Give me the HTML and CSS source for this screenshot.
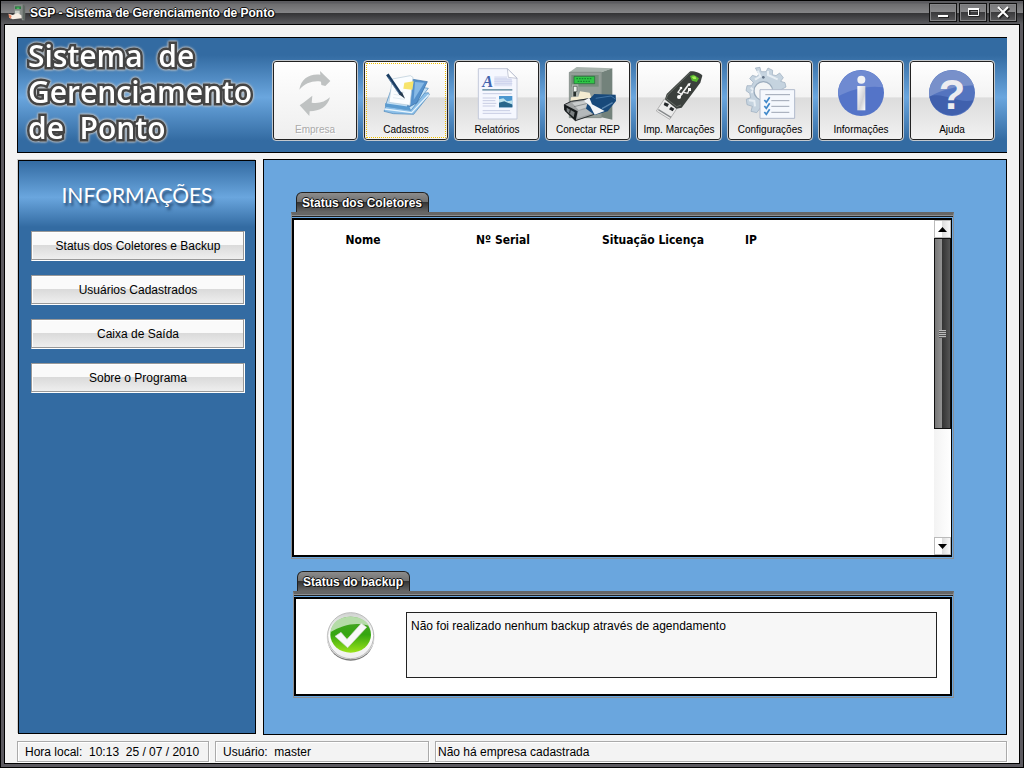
FILE: index.html
```
<!DOCTYPE html>
<html lang="pt-BR">
<head>
    <meta charset="UTF-8">
    <meta name="viewport" content="width=device-width, initial-scale=1.0">
    <title>SGP - Sistema de Gerenciamento de Ponto</title>
    <link rel="stylesheet" href="styles.css">
</head>
<body>
<div class="window">
    <div class="titlebar">
        <svg class="app-icon" viewBox="24 12 54 54">
            <path d="M42 15 L68 13 L76 17 L75 61 L66 61 L64 54 L43 52Z" fill="#858b87"/>
            <path d="M68 13 L76 17 L75 61 L68 58Z" fill="#606863"/>
            <path d="M45 19h18v8h-18z" fill="#2f7a45"/>
            <path d="M50 23h8v3h-8z" fill="#55e06a"/>
            <path d="M45 32h14v10h-14z" fill="#c9cdc6"/>
            <path d="M26 41 L38 45 L53 39 L64 46 L65 55 L38 58 L28 53Z" fill="#f7eee4"/>
            <path d="M26 41 L35 48 L32 56 L27 52Z" fill="#e98461"/>
        </svg>
        <span class="caption">SGP - Sistema de Gerenciamento de Ponto</span>
        <div class="window-buttons">
            <button type="button" aria-label="Minimizar"><svg viewBox="0 0 26 17"><path d="M9 13h10" stroke="#222" stroke-width="2"/><path d="M8 12h10" stroke="#fff" stroke-width="2"/></svg></button>
            <button type="button" aria-label="Maximizar"><svg viewBox="0 0 26 17"><path d="M9.500 6h9v6h-9z" fill="none" stroke="#222" stroke-width="2"/><path d="M8 4h11v2H8z" fill="#fff"/><path d="M8.500 4.500h10v7h-10z" fill="none" stroke="#fff"/></svg></button>
            <button type="button" aria-label="Fechar"><svg viewBox="0 0 26 17"><path d="M9 4l10 10M19 4L9 14" stroke="#222" stroke-width="3"/><path d="M8 3l10 10M18 3L8 13" stroke="#fff" stroke-width="2"/></svg></button>
        </div>
    </div>

    <div class="content">
        <header class="banner">
            <h1>Sistema  de
Gerenciamento
de  Ponto</h1>
            <nav class="toolbar">
                <button type="button" class="tool" disabled>
                    <svg viewBox="60 42 180 180">
                        <g fill="#bfc2c2">
                            <path d="M103 119 C108 85 135 70 166 74 L165 63 L196 93 L181 108 L169 105 L168 95 C145 91 120 99 103 119Z"/>
                            <path d="M195 142 C188 170 165 184 134 184 L133 198 L104 166 L117 157 L142 137 L140 158 C162 162 181 155 195 142Z"/>
                        </g>
                    </svg>
                    <span>Empresa</span>
                </button>
                <button type="button" class="tool focused">
                    <svg viewBox="333 42 180 180">
                        <path d="M357 184 L372 142 L490 128 L493 134 L446 193 L385 191Z" fill="#8cbfe8" stroke="#4a85b8" stroke-width="2"/>
                        <path d="M358 177 L440 188 L491 134" fill="none" stroke="#e8f5fd" stroke-width="4"/>
                        <path d="M361 168 L380 114 L470 112 L490 115 L438 181Z" fill="#c3e1f6" stroke="#4a85b8" stroke-width="2"/>
                        <path d="M438 87 L487 95 L456 158 L427 174Z" fill="#5591cc" stroke="#356ea6" stroke-width="2"/>
                        <path d="M450 96 L478 98 L446 150Z" fill="#86b9e6"/>
                        <path d="M360 160 L433 170 L438 181 L362 170Z" fill="#5a9bd0"/>
                        <path d="M382 87 L436 77 L444 82 L435 166 L372 157Z" fill="#fafdff" stroke="#b5c8d6" stroke-width="2"/>
                        <path d="M418 98 L446 94 L442 119 L415 116Z" fill="#f7e46c"/>
                        <path d="M389 123l29 4M386 133l27 4M384 143l34 5" stroke="#d5e2ec" stroke-width="2"/>
                        <path d="M367 73 L407 132" stroke="#1b3d62" stroke-width="9"/>
                        <path d="M369 82 L403 132" stroke="#6c91b8" stroke-width="2"/>
                        <path d="M402 133 L411 126 L420 146Z" fill="#263b50"/>
                    </svg>
                    <span>Cadastros</span>
                </button>
                <button type="button" class="tool">
                    <svg viewBox="51 42 180 180">
                        <path d="M85 56 L172 56 L201 84 L201 207 L85 207Z" fill="#f5f7fe" stroke="#c3c9da" stroke-width="3"/>
                        <path d="M172 56 L175 82 L201 85Z" fill="#fff" stroke="#aab1c3" stroke-width="2"/>
                        <path d="M133 79h38v7h15v23h-53z" fill="#dfe3f4"/>
                        <path d="M133 87h51M133 94h54M133 101h54" stroke="#c4caea" stroke-width="2"/>
                        <text x="97" y="112" font-family="Liberation Serif, serif" font-size="49" font-style="italic" font-weight="bold" fill="#4264ae">A</text>
                        <path d="M97 117h90v5H97z" fill="#769aab"/>
                        <path d="M98 131h87M98 144h40M98 152h38M98 160h41M98 168h38M98 182h82M98 190h86" stroke="#c7cce3" stroke-width="3"/>
                        <path d="M147 138h40v34h-40z" fill="#4b96cf"/>
                        <path d="M147 148 L160 145 L171 154 L187 151 V162 L147 158Z" fill="#bee3ed"/>
                        <path d="M147 158 L163 154 L187 164 V172 H147Z" fill="#28668b"/>
                    </svg>
                    <span>Relatórios</span>
                </button>
                <button type="button" class="tool">
                    <svg viewBox="324 42 180 180">
                        <path d="M358 67 L380 51 L487 55 L454 67Z" fill="#a9b4ae"/>
                        <path d="M454 67 L487 55 V209 L454 202Z" fill="#73827b"/>
                        <path d="M358 67 H454 V203 H358Z" fill="#949e99" stroke="#737d79" stroke-width="2"/>
                        <path d="M364 75 H446 V110 H364Z" fill="#768d7c"/>
                        <path d="M372 79 H434 V101 H372Z" fill="#30c646" stroke="#26633a" stroke-width="2"/>
                        <path d="M379 86h46M383 94h38" stroke="#148b30" stroke-width="4" stroke-dasharray="5 3"/>
                        <path d="M366 103h19v48h-19z" fill="#abb2ad"/>
                        <path d="M370 109h11v16h-11z" fill="#edf1ed" stroke="#444d49" stroke-width="2"/>
                        <path d="M374 126v13" stroke="#28302c" stroke-width="8"/>
                        <path d="M390 124 L419 128 L424 143 L362 153 L363 142 L385 140Z" fill="#f4ecd1"/>
                        <path d="M343 164 L364 154 L438 143 L451 187 L376 212 L344 180Z" fill="#a1a4a5" stroke="#282c2f" stroke-width="3"/>
                        <path d="M366 158 L427 149 L432 164 L386 180Z" fill="#c9cccd"/>
                        <path d="M385 183 L440 169 L446 184 L382 204Z" fill="#b5b9bb"/>
                        <path d="M372 170 L430 156" stroke="#6d7173" stroke-width="2"/>
                        <path d="M343 163 L383 184 L377 213 L344 182Z" fill="#15191b"/>
                        <path d="M350 173 L374 187 L371 202 L350 184Z" fill="#7b8082"/>
                        <path d="M361 178l-2 12" stroke="#17191a" stroke-width="3"/>
                        <path d="M414 153 L433 132 L497 134 L498 153 L473 184 L434 195 L408 176Z" fill="#18497a"/>
                        <path d="M402 152 L418 143 L426 163 L464 183 L434 194 L420 168Z" fill="#f3f5f8"/>
                        <path d="M437 145 L483 138 L496 147" fill="none" stroke="#4174a4" stroke-width="3"/>
                        <path d="M456 176 L488 158" stroke="#5884ad" stroke-width="4"/>
                    </svg>
                    <span>Conectar REP</span>
                </button>
                <button type="button" class="tool">
                    <svg viewBox="51 42 180 180">
                        <path d="M97 147 L135 175 L113 208 L73 183Z" fill="#ebebeb" stroke="#969696" stroke-width="2"/>
                        <path d="M79 179 L117 202" stroke="#85888a" stroke-width="4"/>
                        <path d="M98 157 L111 162 L106 171 L95 165ZM117 170 L127 176 L122 184 L111 178Z" fill="#24282a"/>
                        <path d="M173 65 C180 61 207 69 211 77 L205 98 L149 173 L133 176 L99 148 L104 132Z" fill="#3b403d"/>
                        <path d="M174 68 L107 135 L103 146 L134 170 L147 165" fill="none" stroke="#686e69" stroke-width="3"/>
                        <path d="M174 78 L185 74 L201 85 L194 96 L180 92Z" fill="#58b62f"/>
                        <path d="M179 80 L190 79 L193 87 L184 87Z" fill="#a8ef58"/>
                        <path d="M143 140 L171 102" stroke="#f4f4f4" stroke-width="5"/>
                        <path d="M166 102 L176 98 L173 109Z" fill="#fff"/>
                        <path d="M151 134 L138 127 L146 116M155 127 L167 130 L172 118" fill="none" stroke="#f1f1f1" stroke-width="4"/>
                        <circle cx="141" cy="141" r="6" fill="#fff"/>
                        <circle cx="147" cy="114" r="4" fill="#fff"/>
                        <path d="M168 114h9v9h-9z" fill="#fff"/>
                    </svg>
                    <span>Imp. Marcações</span>
                </button>
                <button type="button" class="tool">
                    <svg viewBox="324 42 180 180">
                        <path d="M370 54 L384 52 L387 65 L402 65 L408 54 L422 61 L421 74 L432 77 L443 69 L454 83 L446 94 L459 98 L462 111 L447 119 L435 137 L420 182 L385 174 L374 188 L357 184 L361 169 L345 164 L343 148 L356 143 L353 130 L342 122 L345 107 L359 107 L364 97 L353 86 L361 76 L374 80 L381 73Z" fill="#c5d3df" stroke="#99aabc" stroke-width="2"/>
                        <path d="M377 62 L385 79 L369 89 M408 63 L408 75 L437 88 M356 113 L366 121 L358 128 M351 151 L367 153 L369 169" fill="none" stroke="#e7eef4" stroke-width="6"/>
                        <circle cx="394" cy="123" r="28" fill="#f3f5f6" stroke="#9bacbd" stroke-width="4"/>
                        <circle cx="394" cy="82" r="4" fill="#607084"/>
                        <path d="M384 119 H488 V205 H384Z" fill="#f5f8fd" stroke="#b0b9cb" stroke-width="3"/>
                        <path d="M400 134h74M418 152h54M418 169h54M418 187h54" stroke="#9da5b4" stroke-width="3"/>
                        <path d="M397 150l6 7 10-15M397 168l6 7 10-15M397 186l6 7 10-15" fill="none" stroke="#4089ca" stroke-width="5"/>
                    </svg>
                    <span>Configurações</span>
                </button>
                <button type="button" class="tool">
                    <svg viewBox="51 42 180 180">
                        <defs>
                            <linearGradient id="silver" x1="0" y1="0" x2="1" y2="1">
                                <stop offset="0" stop-color="#fff"/><stop offset=".6" stop-color="#d2d2d6"/><stop offset="1" stop-color="#fff"/>
                            </linearGradient>
                        </defs>
                        <circle cx="141" cy="129" r="69" fill="#5474c8"/>
                        <path d="M73 139 A69 69 0 0 1 208 112 C160 105 112 118 73 139Z" fill="#6f8ad1"/>
                        <circle cx="142" cy="89" r="12" fill="#f1f2f5"/>
                        <path d="M130 108h24v73h-24z" fill="url(#silver)"/>
                    </svg>
                    <span>Informações</span>
                </button>
                <button type="button" class="tool">
                    <svg viewBox="324 42 180 180">
                        <circle cx="414" cy="129" r="69" fill="#5474bf"/>
                        <path d="M346 140 A69 69 0 0 1 479 106 C427 108 384 120 346 140Z" fill="#7890ca"/>
                        <path d="M346 140 C386 124 431 163 478 151 A69 69 0 0 1 346 140Z" fill="#4060ad"/>
                        <text x="414" y="178" text-anchor="middle" font-family="Liberation Sans, sans-serif" font-size="130" font-weight="bold" fill="#ededf0">?</text>
                    </svg>
                    <span>Ajuda</span>
                </button>
            </nav>
        </header>

        <div class="columns">
            <aside class="sidebar">
                <h2>INFORMAÇÕES</h2>
                <nav class="menu">
                    <button type="button">Status dos Coletores e Backup</button>
                    <button type="button">Usuários Cadastrados</button>
                    <button type="button">Caixa de Saída</button>
                    <button type="button">Sobre o Programa</button>
                </nav>
            </aside>

            <main class="main">
                <section class="panel collectors">
                    <h3 class="tab">Status dos Coletores</h3>
                    <div class="frame">
                        <div class="panel-body">
                            <div class="table-area">
                                <table>
                                    <thead>
                                        <tr>
                                            <th class="col-name">Nome</th>
                                            <th class="col-serial">Nº Serial</th>
                                            <th class="col-license">Situação Licença</th>
                                            <th class="col-ip">IP</th>
                                        </tr>
                                    </thead>
                                </table>
                            </div>
                            <div class="scrollbar">
                                <button type="button" aria-label="Subir"><svg viewBox="0 0 9 5"><path d="M0 5L4.500 0L9 5Z"/></svg></button>
                                <div class="track">
                                    <div class="thumb"><span class="grip"></span></div>
                                </div>
                                <button type="button" aria-label="Descer"><svg viewBox="0 0 9 5"><path d="M0 0L4.500 5L9 0Z"/></svg></button>
                            </div>
                        </div>
                    </div>
                </section>

                <section class="panel backup">
                    <h3 class="tab" id="backup-title">Status do backup</h3>
                    <div class="frame">
                        <div class="panel-body">
                            <svg class="ok-icon" viewBox="135 243 153 150">
                                <defs>
                                    <linearGradient id="rim" x1="0" y1="0" x2="0" y2="1">
                                        <stop offset="0" stop-color="#d0d3d0"/><stop offset=".5" stop-color="#fff"/><stop offset="1" stop-color="#eee"/>
                                    </linearGradient>
                                    <linearGradient id="green" x1="0" y1="0" x2="0" y2="1">
                                        <stop offset="0" stop-color="#4aa52c"/><stop offset=".5" stop-color="#35a60f"/><stop offset="1" stop-color="#9be31b"/>
                                    </linearGradient>
                                </defs>
                                <ellipse cx="212" cy="323" rx="70" ry="66" fill="#777"/>
                                <ellipse cx="212" cy="318" rx="72" ry="67" fill="#e4e4e4"/>
                                <circle cx="212" cy="314" r="69" fill="url(#rim)" stroke="#bbb" stroke-width="3"/>
                                <ellipse cx="212" cy="311" rx="61" ry="54" fill="url(#green)"/>
                                <path d="M151 304 C155 272 180 257 211 257 C238 257 259 267 268 285 C228 272 188 281 151 304Z" fill="#b5dca8"/>
                                <path d="M165 316 L183 304 L201 325 L244 277 L260 289 L203 350Z" fill="#f8f8f8" stroke="#cfd5ca" stroke-width="2"/>
                            </svg>
                            <textarea readonly aria-labelledby="backup-title">Não foi realizado nenhum backup através de agendamento</textarea>
                        </div>
                    </div>
                </section>
            </main>
        </div>

        <footer class="statusbar">
            <div class="clock">Hora local:  10:13  25 / 07 / 2010</div>
            <div class="user">Usuário:  master</div>
            <div class="company">Não há empresa cadastrada</div>
        </footer>
    </div>
</div>
</body>
</html>
```
FILE: styles.css
```
* {
    box-sizing: border-box;
}

body {
    margin: 0;
    font-family: "Liberation Sans", Arial, sans-serif;
    font-size: 12px;
    color: #000;
}

h1, h2, h3 {
    margin: 0;
}

button {
    font-family: inherit;
    color: #000;
    padding: 0;
    cursor: pointer;
}

svg {
    display: block;
}

.window {
    display: flex;
    flex-direction: column;
    min-height: 100vh;
    border: 1px solid #000;
    background-color: #5c5a60;
    padding: 0 3px 3px;
}

/* title bar */
.titlebar {
    display: flex;
    align-items: center;
    height: 23px;
    margin: 0 -3px;
    padding: 0 6px 0 7px;
    background: linear-gradient(#5c5c60 0, #5c5c60 2px, #6c6c6e 3px, #858587 12px, #333335 12px, #5c5c60 100%);
}

.app-icon {
    width: 18px;
    height: 18px;
    margin-right: 4px;
}

.caption {
    flex: 1;
    font-size: 12px;
    font-weight: bold;
    color: #fff;
    text-shadow: 1px 1px #111, -1px 0 #111, 0 -1px #111, 1px 0 #111, 0 1px #111;
}

.window-buttons {
    display: flex;
    gap: 2px;
}

.window-buttons button {
    width: 28px;
    height: 19px;
    border: 1px solid #111;
    background: linear-gradient(#777779, #8a8a8c 50%, #3a3a3c 50%, #58585a);
    box-shadow: inset 0 0 0 1px #858587;
}

.content {
    flex: 1;
    display: flex;
    flex-direction: column;
    gap: 6px;
    border: 1px solid #000;
    background-color: #f3f3f3;
    padding: 12px 12px 1px;
}

/* banner */
.banner {
    display: flex;
    justify-content: space-between;
    align-items: flex-start;
    height: 116px;
    padding: 0 12px 0 10px;
    border: 1px solid #000;
    border-right: none;
    background: linear-gradient(#336ba2 15%, #6aa6de 52%, #336ba2 90%);
}

.banner h1 {
    font-family: "Open Sans", "Noto Sans", sans-serif;
    font-size: 30px;
    font-weight: 600;
    line-height: 36px;
    white-space: pre;
    color: #fff;
    -webkit-text-stroke: 5px #444;
    paint-order: stroke fill;
    filter: drop-shadow(0 0 1px #ccc) drop-shadow(0 0 1px #bbb);
}

.toolbar {
    display: flex;
    gap: 5px;
    padding-top: 22px;
}

.tool {
    display: flex;
    flex-direction: column;
    align-items: center;
    width: 86px;
    height: 81px;
    padding-top: 3px;
    border: 1px solid #c3c8cd;
    border-radius: 4px;
    background: linear-gradient(#fff, #f3f3f3 45%, #dcdcdc 47%, #f2f2f2);
    box-shadow: inset 0 0 0 1px #222;
    font-size: 10px;
}

.tool svg {
    width: 60px;
    height: 60px;
}

.tool span {
    line-height: 12px;
}

.tool:disabled {
    color: #aaa;
    background: linear-gradient(#fff, #eee);
    text-shadow: 1px 1px #fff;
}

.tool.focused {
    outline: 1px dotted #f0c000;
    outline-offset: -4px;
}

/* columns */
.columns {
    flex: 1;
    display: flex;
    gap: 6px;
}

.sidebar {
    width: 238px;
    margin: 1px;
    border: 1px solid #000;
    box-shadow: -1px -1px #ccc;
    background: #336ba2 linear-gradient(#336ba2, #6aa6de 55%, #336ba2) no-repeat 0 0 / 100% 66px;
}

.sidebar h2 {
    height: 70px;
    font-family: Lato, "Open Sans", sans-serif;
    font-size: 21px;
    font-weight: normal;
    line-height: 68px;
    text-align: center;
    color: #fff;
    text-shadow: 2px 3px 3px #1d3f66;
}

.menu {
    display: flex;
    flex-direction: column;
    gap: 14px;
    padding: 0 10px 0 12px;
}

.menu button {
    height: 30px;
    border: 1px solid #999;
    border-color: #999 #fff #fff #999;
    background: linear-gradient(#fafafa 45%, #dadada 47%, #f0f0f0);
    box-shadow: inset -1px -1px #999, inset 1px 1px #fff;
    font-size: 12px;
}

.main {
    flex: 1;
    display: flex;
    flex-direction: column;
    gap: 12px;
    padding: 32px 52px 36px 27px;
    border: 1px solid #000;
    background-color: #6aa6de;
}

/* panels */
.panel {
    display: flex;
    flex-direction: column;
    align-items: flex-start;
}

.collectors {
    flex: 1;
}

.tab {
    height: 20px;
    margin-left: 5px;
    padding: 0 6px 0 5px;
    border: 1px solid #222;
    border-bottom: none;
    border-radius: 6px 6px 0 0;
    background: linear-gradient(#8c8c8c, #707070 48%, #333 50%, #666);
    font-size: 12px;
    line-height: 20px;
    color: #fff;
    text-shadow: 1px 1px #111, -1px 0 #111, 0 -1px #111, 1px 0 #111;
}

.frame {
    flex: 1;
    display: flex;
    align-self: stretch;
    padding: 3px 1px 1px 0;
    border: 1px solid #8b8f93;
    border-top: 3px solid #666;
    box-shadow: inset 0 1px #8b8f93, inset 0 2px #222;
}

.panel-body {
    flex: 1;
    display: flex;
    border: 2px solid #000;
    background-color: #fff;
}

.collectors .panel-body {
    border-right-width: 1px;
}

.table-area {
    flex: 1;
}

table {
    width: 100%;
    table-layout: fixed;
    border-collapse: collapse;
    margin-top: 9px;
}

th {
    padding: 0;
    height: 22px;
    font-family: "DejaVu Sans Condensed", "DejaVu Sans", sans-serif;
    font-size: 12px;
}

.col-name {
    width: 138px;
}

.col-serial {
    width: 142px;
}

.col-license {
    width: 158px;
}

.col-ip {
    padding-left: 13px;
    text-align: left;
}

/* scrollbar */
.scrollbar {
    display: flex;
    flex-direction: column;
    width: 17px;
}

.scrollbar button {
    display: flex;
    align-items: center;
    justify-content: center;
    height: 18px;
    border: 1px solid #bbb;
    background: linear-gradient(90deg, #fff 45%, #ddd 50%, #f8f8f8);
}

.scrollbar button svg {
    width: 9px;
    height: 5px;
}

.track {
    flex: 1;
    background: linear-gradient(90deg, #f3f3f3, #fff);
}

.thumb {
    display: flex;
    align-items: center;
    justify-content: center;
    height: 64%;
    border: 1px solid #111;
    background: linear-gradient(90deg, #777, #929292 45%, #333 47%, #555);
}

.grip {
    width: 7px;
    height: 8px;
    background: repeating-linear-gradient(#bbb 0, #bbb 1px, #555 1px, #555 2px);
}

/* backup */
.backup {
    margin-left: 2px;
}

.backup .tab {
    margin-left: 4px;
}

.backup .panel-body {
    padding: 13px 13px 16px 29px;
    gap: 30px;
}

.ok-icon {
    width: 51px;
    height: 50px;
}

textarea {
    flex: 1;
    height: 66px;
    padding: 6px 4px;
    border: 1px solid #222;
    border-radius: 0;
    outline: none;
    resize: none;
    background-color: #f7f7f7;
    font-family: inherit;
    font-size: 12px;
    color: #000;
}

/* status bar */
.statusbar {
    display: flex;
    gap: 6px;
}

.statusbar div {
    height: 21px;
    padding-left: 7px;
    border: 1px solid #aaa;
    box-shadow: 1px 1px #fff, inset 1px 1px #fff;
    line-height: 21px;
    white-space: pre;
}

.statusbar .clock {
    width: 192px;
}

.statusbar .user {
    width: 214px;
}

.statusbar .company {
    flex: 1;
    padding-left: 2px;
}
```
